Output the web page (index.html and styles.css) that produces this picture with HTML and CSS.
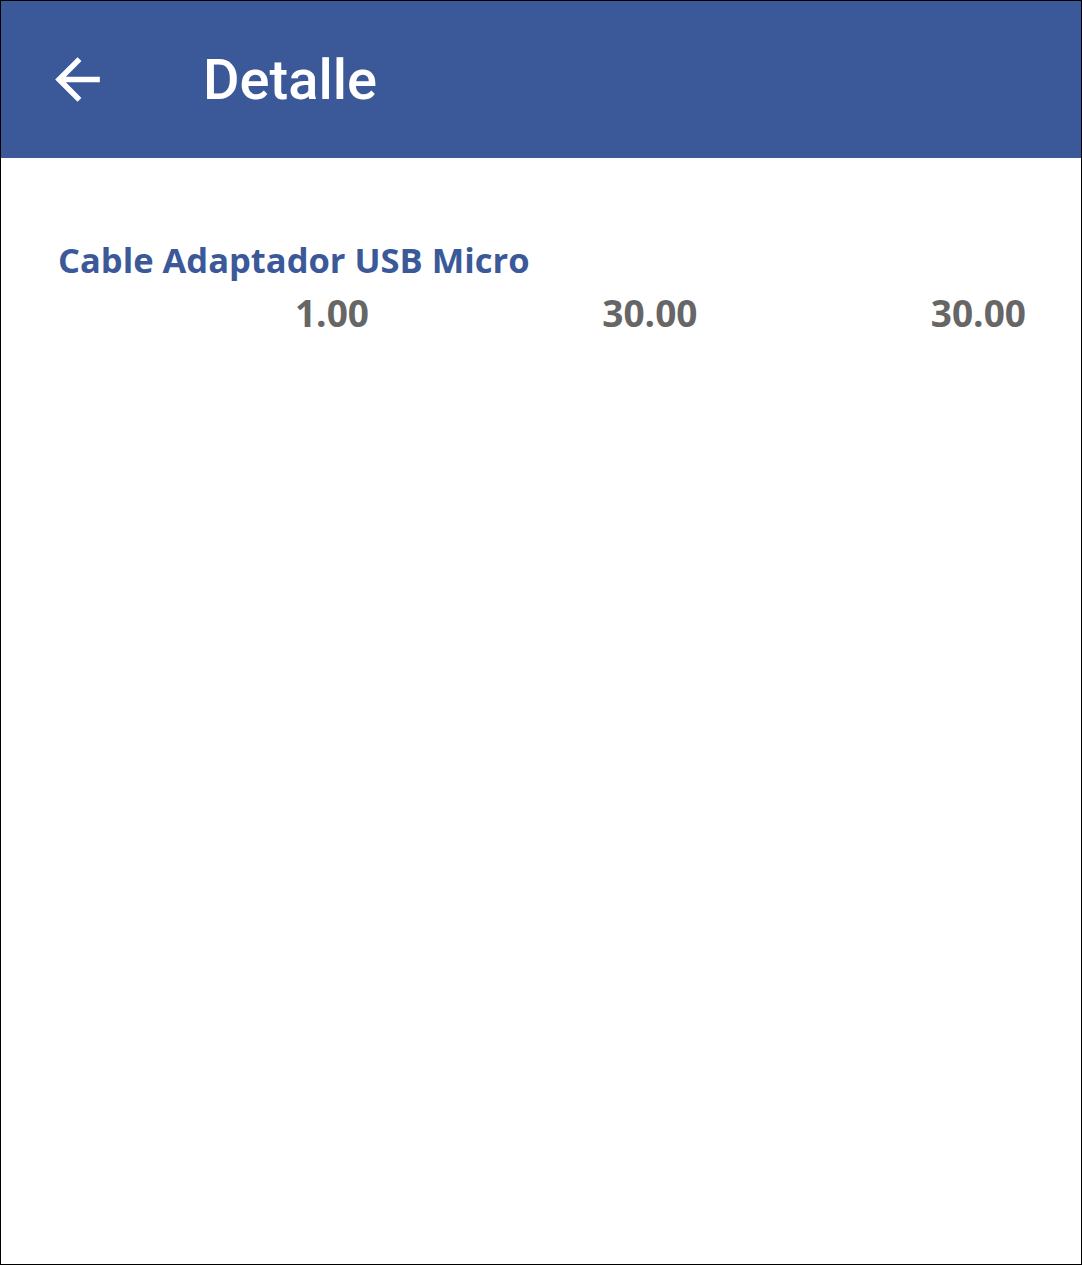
FILE: index.html
```html
<!DOCTYPE html>
<html lang="es">
<head>
<meta charset="utf-8">
<title>Detalle</title>
<link rel="stylesheet" href="styles.css">
</head>
<body>
<div class="screen">
  <header class="appbar">
    <button class="back" aria-label="Volver">
      <svg viewBox="0 0 24 24" width="67" height="67"><path fill="#fff" d="M20 11H7.83l5.59-5.59L12 4l-8 8 8 8 1.41-1.41L7.83 13H20v-2z"/></svg>
    </button>
    <h1 class="title">Detalle</h1>
  </header>
  <main class="content">
    <h2 class="product">Cable Adaptador USB Micro</h2>
    <div class="row">
      <span class="num">1.00</span>
      <span class="num">30.00</span>
      <span class="num">30.00</span>
    </div>
  </main>
</div>
</body>
</html>
```
FILE: styles.css
```css
* { box-sizing: border-box; }
html, body { margin: 0; padding: 0; background: #fff; }
.screen {
  width: 1082px;
  height: 1265px;
  border: 1px solid #000;
  background: #fff;
  overflow: hidden;
}
.appbar {
  height: 157px;
  background: #3b5998;
  display: flex;
  align-items: center;
  padding-left: 43px;
}
.back {
  width: 67px;
  height: 67px;
  padding: 0;
  border: 0;
  background: none;
  display: flex;
}
.title {
  margin: 0 0 0 92px;
  font-family: Roboto, "Liberation Sans", sans-serif;
  font-weight: 500;
  font-size: 56px;
  color: #fff;
  line-height: 1;
}
.content {
  padding: 78px 55px 0 57px;
}
.product {
  margin: 0;
  font-family: "Open Sans", "Liberation Sans", sans-serif;
  font-weight: 700;
  font-size: 34.5px;
  line-height: 48px;
  color: #3b5998;
}
.row {
  display: grid;
  grid-template-columns: 311px 1fr 1fr;
  font-family: "Open Sans", "Liberation Sans", sans-serif;
  font-weight: 700;
  font-size: 37px;
  line-height: 48px;
  color: #666;
  margin-top: 5px;
}
.num { text-align: right; }
```
